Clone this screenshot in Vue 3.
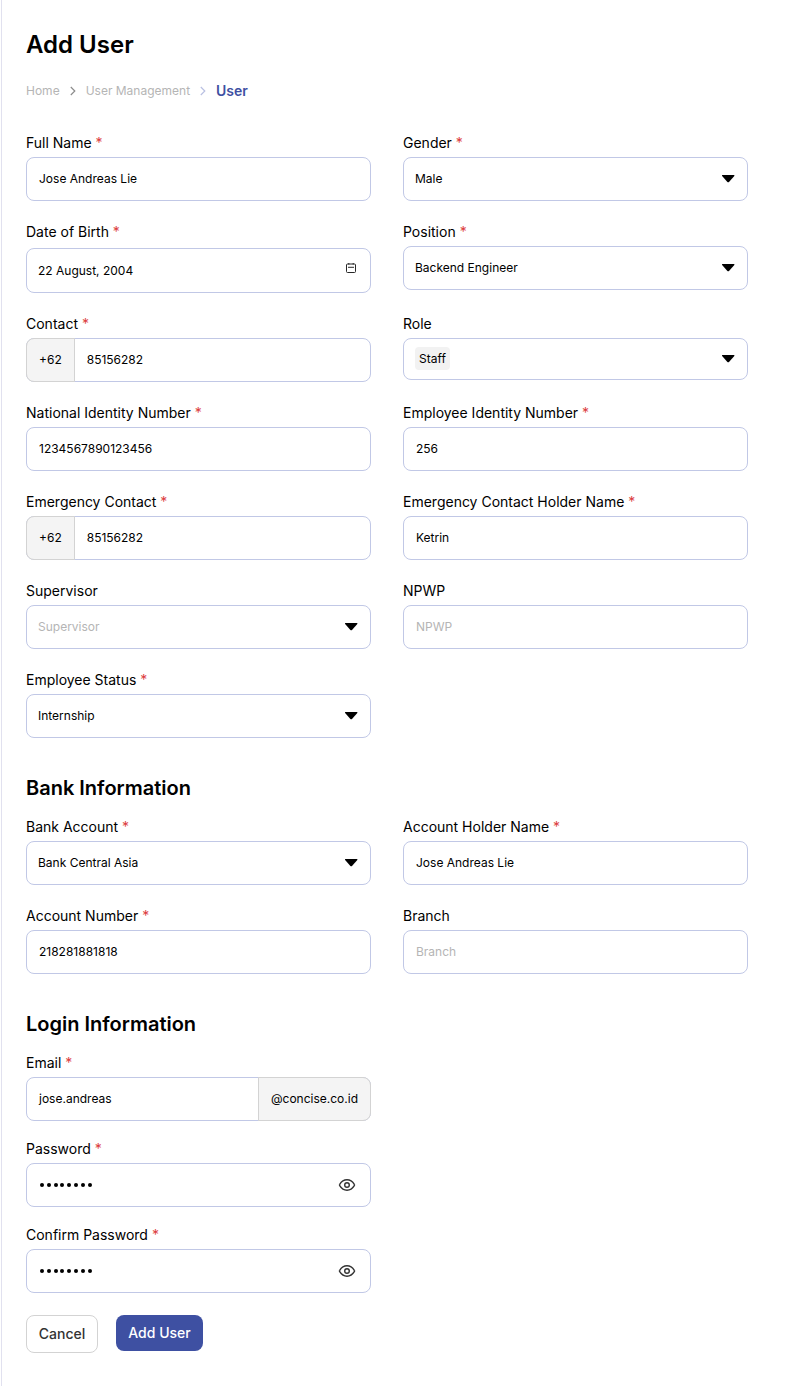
<script setup>
const profile = [
  { label: 'Full Name', required: true, value: 'Jose Andreas Lie' },
  { label: 'Gender', required: true, type: 'select', value: 'Male' },
  { label: 'Date of Birth', required: true, type: 'date', value: '22 August, 2004' },
  { label: 'Position', required: true, type: 'select', value: 'Backend Engineer' },
  { label: 'Contact', required: true, prefix: '+62', value: '85156282' },
  { label: 'Role', type: 'tags', tag: 'Staff' },
  { label: 'National Identity Number', required: true, value: '1234567890123456' },
  { label: 'Employee Identity Number', required: true, value: '256' },
  { label: 'Emergency Contact', required: true, prefix: '+62', value: '85156282' },
  { label: 'Emergency Contact Holder Name', required: true, value: 'Ketrin' },
  { label: 'Supervisor', type: 'select', placeholder: 'Supervisor' },
  { label: 'NPWP', placeholder: 'NPWP' },
  { label: 'Employee Status', required: true, type: 'select', value: 'Internship' },
]
const bank = [
  { label: 'Bank Account', required: true, type: 'select', value: 'Bank Central Asia' },
  { label: 'Account Holder Name', required: true, value: 'Jose Andreas Lie' },
  { label: 'Account Number', required: true, value: '218281881818' },
  { label: 'Branch', placeholder: 'Branch' },
]
const login = [
  { label: 'Email', required: true, value: 'jose.andreas', suffix: '@concise.co.id' },
  { label: 'Password', required: true, type: 'password', value: '' },
  { label: 'Confirm Password', required: true, type: 'password', value: '' },
]
const sections = [
  { title: '', name: 'profile', fields: profile },
  { title: 'Bank Information', name: 'bank', fields: bank },
  { title: 'Login Information', name: 'login', fields: login },
]
</script>

<template>
  <main class="page">
    <h1>Add User</h1>
    <nav class="crumbs">
      <span>Home</span>
      <svg class="chevron" width="8" height="10" viewBox="0 0 8 10"><path d="M1.8 1 5.8 5 1.8 9" /></svg>
      <span>User Management</span>
      <svg class="chevron light" width="8" height="10" viewBox="0 0 8 10"><path d="M1.8 1 5.8 5 1.8 9" /></svg>
      <strong>User</strong>
    </nav>

    <section v-for="s in sections" :key="s.name" :class="s.name">
      <h2 v-if="s.title">{{ s.title }}</h2>
      <div class="grid">
        <div v-for="f in s.fields" :key="f.label" class="field">
          <div class="label">{{ f.label }}<span v-if="f.required" class="star"> *</span></div>
          <div class="control" :class="f.type">
            <span v-if="f.prefix" class="addon prefix">{{ f.prefix }}</span>
            <span v-if="f.tag" class="tag">{{ f.tag }}</span>
            <span v-else-if="f.type === 'password'" class="dots"><i v-for="n in 8" :key="n"></i></span>
            <span v-else class="value" :class="{ placeholder: !f.value }">{{ f.value || f.placeholder }}</span>
            <svg v-if="f.type === 'select' || f.type === 'tags'" class="caret" width="14" height="8" viewBox="0 0 14 8">
              <path d="M1.4.1h11.6q.7.1.3.8L8 6.9q-.8.8-1.6 0L1.1.9Q.7.2 1.4.1z" />
            </svg>
            <svg v-if="f.type === 'date'" class="calendar" width="12" height="12" viewBox="0 0 12 12">
              <rect x="1.5" y="2" width="9" height="8.5" rx="1" />
              <path d="M3.8 1v1.6M8.2 1v1.6M3 5.3h6" />
            </svg>
            <svg v-if="f.type === 'password'" class="eye" width="18" height="14" viewBox="0 0 18 14">
              <path d="M1.7 7.7Q1.2 7 1.7 6.3C3.6 3.2 6 1.8 9 1.8s5.4 1.4 7.3 4.5q.5.7 0 1.4C14.4 10.8 12 12.2 9 12.2S3.6 10.8 1.7 7.7z" />
              <circle cx="9" cy="7" r="2.3" />
            </svg>
            <span v-if="f.suffix" class="addon suffix">{{ f.suffix }}</span>
          </div>
        </div>
      </div>
    </section>

    <div class="actions">
      <button class="cancel" type="button">Cancel</button>
      <button class="submit" type="button">Add User</button>
    </div>
  </main>
</template>

<style>
body { background: #fff; }
</style>

<style scoped>
.page {
  box-sizing: border-box;
  height: 1386px;
  margin-left: 1px;
  border-left: 1px solid #e1e1ef;
  padding: 28px 40px 0 24px;
  font-family: Inter, "Liberation Sans", sans-serif;
  color: #000;
}
h1 { margin: 0; font-size: 24px; line-height: 34px; font-weight: 600; }
.crumbs { display: flex; align-items: center; height: 20px; margin-top: 18px; font-size: 12px; color: #b5b5b5; }
.crumbs strong { font-size: 14px; font-weight: 600; color: #3e50a2; }
.chevron { margin: 1px 9px 0; fill: none; stroke: #8c8c8c; stroke-width: 1.2; }
.light { stroke: #b9c0e2; }
.profile { margin-top: 33px; }
.grid { display: grid; grid-template-columns: 345px 345px; gap: 21px 32px; }
.login .grid { grid-template-columns: 345px; row-gap: 18px; }
h2 { margin: 35px 0 14px; font-size: 20px; line-height: 30px; font-weight: 600; }
.label { height: 20px; margin-bottom: 4px; font-size: 14px; line-height: 20px; white-space: pre; }
.star { color: #dc3e3e; }
.control {
  box-sizing: border-box;
  display: flex;
  align-items: center;
  height: 44px;
  border: 1px solid #c1c8e6;
  border-radius: 8px;
  padding: 0 12px;
  font-size: 12px;
  line-height: 18px;
}
.control.select, .control.tags, .control.date { padding-left: 11px; }
.control.date { height: 45px; margin-top: 6px; }
.control.tags { height: 42px; }
.value { flex: 1; }
.placeholder { color: #b5b5b5; }
.tag { margin: -1px auto 0 0; padding: 3px 4px 2px; line-height: 18px; border-radius: 4px; background: #f2f2f2; }
.caret { fill: #000; }
.calendar { margin: -5px 1px 0 0; fill: none; stroke: #282828; }
.addon { box-sizing: border-box; height: 44px; flex: none; padding: 0 12px; line-height: 42px; border: 1px solid #d3d3d3; background: #f4f4f4; }
.prefix { margin: -1px 12px -1px -13px; border-radius: 8px 0 0 8px; }
.suffix { margin: -1px -13px -1px 0; border-radius: 0 8px 8px 0; }
.dots { display: flex; gap: 2.8px; margin: 0 auto 0 1px; }
.dots i { width: 4px; height: 4px; border-radius: 50%; background: #000; }
.eye { margin-right: 2px; fill: none; stroke: #333; stroke-width: 1.4; }
.actions { display: flex; align-items: flex-start; gap: 18px; margin-top: 22px; }
button { box-sizing: border-box; padding: 0; font: 500 14px/20px Inter, "Liberation Sans", sans-serif; border-radius: 8px; }
.cancel { width: 72px; height: 38px; border: 1px solid #d3d3d3; background: #fff; color: #333; }
.submit { width: 87px; height: 36px; border: 0; background: #3e50a2; color: #fff; }
</style>
